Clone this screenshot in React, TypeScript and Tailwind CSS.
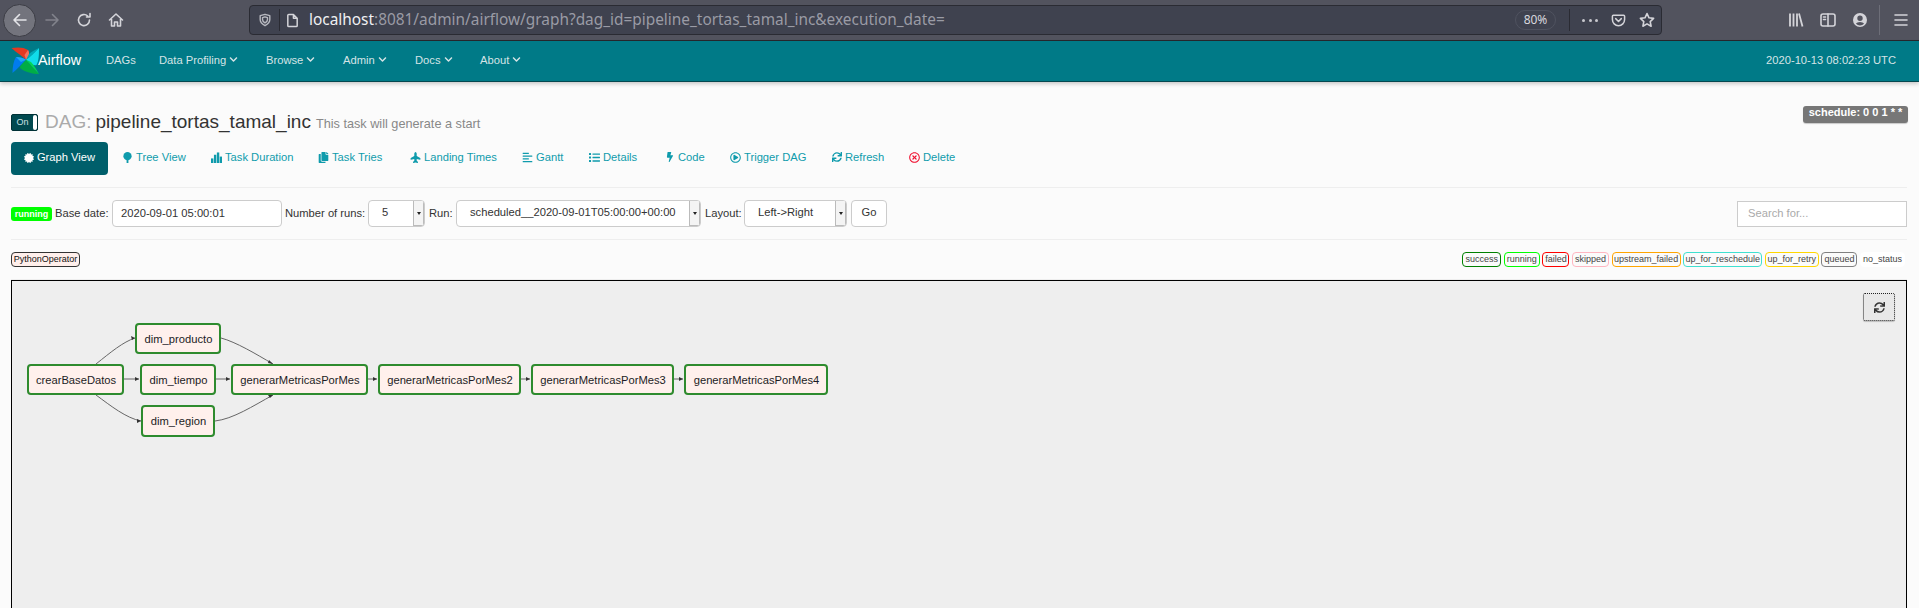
import {
  FaAlignLeft,
  FaBolt,
  FaCertificate,
  FaChevronDown,
  FaCopy,
  FaList,
  FaPlane,
  FaRegPlayCircle,
  FaRegTimesCircle,
  FaSync,
} from "react-icons/fa";

const SANS = "font-['Liberation_Sans',Arial,sans-serif]";

const NAV_ITEMS = [
  { label: "DAGs", className: "w-[53px]", menu: false },
  { label: "Data Profiling", className: "w-[107px]", menu: true },
  { label: "Browse", className: "w-[77px]", menu: true },
  { label: "Admin", className: "w-[72px]", menu: true },
  { label: "Docs", className: "w-[65px]", menu: true },
  { label: "About", className: "w-[60px]", menu: true },
];

function TreeIcon() {
  return (
    <svg viewBox="0 0 12 12" className="w-[11px] h-[11px] fill-current">
      <circle cx="6" cy="4.5" r="4.5" />
      <rect x="5" y="6" width="2" height="6" />
    </svg>
  );
}

function StatsIcon() {
  return (
    <svg viewBox="0 0 12 12" className="w-[11px] h-[11px] fill-current">
      <rect x="0" y="7" width="2.6" height="5" />
      <rect x="3.2" y="3" width="2.6" height="9" />
      <rect x="6.4" y="0.5" width="2.6" height="11.5" />
      <rect x="9.5" y="5" width="2.5" height="7" />
    </svg>
  );
}

const TABS = [
  { label: "Tree View", icon: <TreeIcon />, className: "w-[89px]", iconClass: "text-[#0f9bac]" },
  { label: "Task Duration", icon: <StatsIcon />, className: "w-[107px]", iconClass: "text-[#0f9bac]" },
  { label: "Task Tries", icon: <FaCopy size={11} />, className: "w-[92px]", iconClass: "text-[#0f9bac]" },
  { label: "Landing Times", icon: <FaPlane size={11} className="-rotate-90" />, className: "w-[112px]", iconClass: "text-[#0f9bac]" },
  { label: "Gantt", icon: <FaAlignLeft size={11} />, className: "w-[67px]", iconClass: "text-[#0f9bac]" },
  { label: "Details", icon: <FaList size={11} />, className: "w-[75px]", iconClass: "text-[#0f9bac]" },
  { label: "Code", icon: <FaBolt size={10} />, className: "w-[66px]", iconClass: "text-[#0f9bac]" },
  { label: "Trigger DAG", icon: <FaRegPlayCircle size={11} />, className: "w-[101px]", iconClass: "text-[#0f9bac]" },
  { label: "Refresh", icon: <FaSync size={10} />, className: "w-[78px]", iconClass: "text-[#0f9bac]" },
  { label: "Delete", icon: <FaRegTimesCircle size={11} />, className: "w-[60px]", iconClass: "text-[#f01030]" },
];

const STATES = [
  { label: "success", className: "w-[39px] border-[#008000]" },
  { label: "running", className: "w-[36px] border-[#00ff00]" },
  { label: "failed", className: "w-[27px] border-[#ff0000]" },
  { label: "skipped", className: "w-[37px] border-[#ffb6c1]" },
  { label: "upstream_failed", className: "w-[69px] border-[#ffa500]" },
  { label: "up_for_reschedule", className: "w-[79px] border-[#40e0d0]" },
  { label: "up_for_retry", className: "w-[54px] border-[#ffd700]" },
  { label: "queued", className: "w-[36px] border-[#808080]" },
  { label: "no_status", className: "w-[45px] border-white bg-white" },
];

const NODES = [
  { label: "crearBaseDatos", className: "left-[15px] top-[83px] w-[97px] h-[31px]" },
  { label: "dim_producto", className: "left-[123px] top-[42px] w-[86px] h-[31px]" },
  { label: "dim_tiempo", className: "left-[128px] top-[83px] w-[76px] h-[31px]" },
  { label: "dim_region", className: "left-[129px] top-[124px] w-[74px] h-[32px]" },
  { label: "generarMetricasPorMes", className: "left-[219px] top-[83px] w-[137px] h-[31px]" },
  { label: "generarMetricasPorMes2", className: "left-[366px] top-[83px] w-[143px] h-[31px]" },
  { label: "generarMetricasPorMes3", className: "left-[519px] top-[83px] w-[143px] h-[31px]" },
  { label: "generarMetricasPorMes4", className: "left-[672px] top-[83px] w-[144px] h-[31px]" },
];

// edge paths, in the coordinates of the graph box
const EDGES = [
  "M84 83 C99 71 111 61 123 57",
  "M112 98 L127 98",
  "M84 114 C99 125 114 137 129 140",
  "M209 57 C224 61 244 73 261 83",
  "M204 98 L218 98",
  "M203 140 C221 138 241 125 261 114",
  "M356 98 L365 98",
  "M509 98 L518 98",
  "M662 98 L671 98",
];

const ARROWS = [
  "M123 57 L119 55 L120 59 Z",
  "M127 98 L123 96 L123 100 Z",
  "M129 140 L125 138 L125 142 Z",
  "M261 83 L257 79 L256 82 Z",
  "M218 98 L214 96 L214 100 Z",
  "M261 114 L256 114 L258 117 Z",
  "M365 98 L361 96 L361 100 Z",
  "M518 98 L514 96 L514 100 Z",
  "M671 98 L667 96 L667 100 Z",
];

function BrowserIcon({ children, className }: { children: React.ReactNode; className: string }) {
  return (
    <svg
      viewBox="0 0 16 16"
      fill="none"
      stroke="currentColor"
      strokeWidth="1.6"
      strokeLinecap="round"
      strokeLinejoin="round"
      className={className}
    >
      {children}
    </svg>
  );
}

function BrowserBar() {
  return (
    <div className="h-[41px] bg-[#52535e] border-b border-[#26272c] flex items-center text-[#d4d4d9] font-['Noto_Sans',sans-serif]">
      {/* back / forward / reload / home */}
      <div className="w-[33px] h-[33px] ml-[3px] rounded-full bg-[#73747d] border border-[#3c3d45] flex items-center justify-center">
        <BrowserIcon className="w-[16px] h-[16px] text-[#e4e4e8]">
          <path d="M14 8H2M7.5 2.5 2 8l5.5 5.5" />
        </BrowserIcon>
      </div>
      <BrowserIcon className="w-[16px] h-[16px] ml-[8px] text-[#82838c]">
        <path d="M2 8h12M8.5 2.5 14 8l-5.5 5.5" />
      </BrowserIcon>
      <BrowserIcon className="w-[16px] h-[16px] ml-[16px]">
        <path d="M13.5 8a5.5 5.5 0 1 1-1.8-4M14 1.5V5h-3.5" />
      </BrowserIcon>
      <BrowserIcon className="w-[16px] h-[16px] ml-[16px]">
        <path d="M1.5 8 8 2l6.5 6M3.5 7v7h3v-4h3v4h3V7" />
      </BrowserIcon>

      {/* address bar */}
      <div className="w-[1413px] h-[30px] ml-[125px] rounded-[4px] bg-[#3f424f] border border-[#2a2b33] flex items-center">
        <BrowserIcon className="w-[14px] h-[14px] ml-[8px] text-[#b8b9c0]">
          <path d="M8 1.5 2.5 3v4.5c0 3 2.5 5.5 5.5 7 3-1.5 5.5-4 5.5-7V3z" />
          <path d="M8 4.5 5.2 5.3v2.4c0 1.5 1.2 2.7 2.8 3.6 1.6-.9 2.8-2.1 2.8-3.6V5.3z" />
        </BrowserIcon>
        <div className="w-px h-[22px] bg-[#2a2b33] ml-[7px]" />
        <BrowserIcon className="w-[15px] h-[15px] ml-[5px] text-[#d4d4d9]">
          <path d="M3 2.5C3 1.9 3.4 1.5 4 1.5h5l4 4v8c0 .6-.4 1-1 1H4c-.6 0-1-.4-1-1zM9 1.5v4h4" />
        </BrowserIcon>
        <div className="ml-[9px] w-[1206px] text-[15.4px] leading-[22px] text-[#9a9ba5] whitespace-nowrap">
          <span className="text-[#f0f0f3]">localhost</span>:8081/admin/airflow/graph?dag_id=pipeline_tortas_tamal_inc&amp;execution_date=
        </div>
        <div className="w-[41px] h-[20px] rounded-full border border-[#4f525f] flex items-center justify-center text-[12px] text-[#d8d8de] shrink-0">
          80%
        </div>
        <div className="w-px h-[22px] bg-[#2a2b33] ml-[13px] shrink-0" />
        <div className="ml-[12px] w-[16px] flex justify-between shrink-0">
          <span className="w-[3px] h-[3px] rounded-full bg-[#c8c8ce]" />
          <span className="w-[3px] h-[3px] rounded-full bg-[#c8c8ce]" />
          <span className="w-[3px] h-[3px] rounded-full bg-[#c8c8ce]" />
        </div>
        <BrowserIcon className="w-[15px] h-[15px] ml-[13px] shrink-0 text-[#d4d4d9]">
          <path d="M2.5 2.5h11c.5 0 1 .4 1 1V7a6.5 6.5 0 0 1-13 0V3.5c0-.6.5-1 1-1zM5 6l3 3 3-3" />
        </BrowserIcon>
        <BrowserIcon className="w-[16px] h-[16px] ml-[13px] shrink-0 text-[#d4d4d9]">
          <path d="m8 1.5 2 4.3 4.6.6-3.4 3.2.9 4.6L8 11.9l-4.1 2.3.9-4.6L1.4 6.4 6 5.8z" />
        </BrowserIcon>
      </div>

      {/* toolbar right */}
      <svg viewBox="0 0 16 16" fill="none" stroke="currentColor" strokeWidth="1.8" className="w-[16px] h-[16px] ml-[126px]">
        <path d="M2 1.5v13M5.5 1.5v13M9 1.5v13M11 1.5l3.5 13" />
      </svg>
      <BrowserIcon className="w-[16px] h-[16px] ml-[16px]">
        <rect x="1" y="2" width="14" height="12" rx="2" />
        <path d="M8 2v12M3.5 5h2M3.5 7.5h2" />
      </BrowserIcon>
      <svg viewBox="0 0 16 16" className="w-[16px] h-[16px] ml-[16px] fill-current">
        <path d="M8 1a7 7 0 1 0 0 14A7 7 0 0 0 8 1zm0 2.5a2.7 2.7 0 1 1 0 5.4 2.7 2.7 0 0 1 0-5.4zm0 10a5.5 5.5 0 0 1-4-1.7c.6-1.2 2.2-1.9 4-1.9s3.4.7 4 1.9a5.5 5.5 0 0 1-4 1.7z" />
      </svg>
      <div className="w-px h-[30px] bg-[#6d6e78] ml-[11px]" />
      <BrowserIcon className="w-[16px] h-[16px] ml-[13px]">
        <path d="M2 3h12M2 8h12M2 13h12" />
      </BrowserIcon>
    </div>
  );
}

function AirflowLogo() {
  return (
    <svg viewBox="0 0 28 28" className="w-[28px] h-[28px] shrink-0">
      {/* red blade */}
      <path d="M0.5 1 C6 0 13 0 17 3 C19 6 18 10 15 12.7 C11 9 6 6 0.5 1 Z" fill="#e43921" />
      <path d="M17 3 C19 6 18 10 15 12.7 L13.5 8 Z" fill="#f4725f" />
      {/* cyan blade */}
      <path d="M28 1 C28 7 28 14 25.5 18 C22 19 18 16 15 12.7 C19 10 23 6 28 1 Z" fill="#11dcea" />
      <path d="M15 12.7 C19 10 23 6 28 1 C24 3 20 5 18 7 Z" fill="#00a9b8" />
      {/* green blade */}
      <path d="M28 27 C22 27 14 25 9 21 C9 18 12 15 15 12.7 C19 17 23 22 28 27 Z" fill="#00ad46" />
      <path d="M15 12.7 C19 17 23 22 28 27 C25 22 23 18 20 15 Z" fill="#04d659" />
      {/* blue blade */}
      <path d="M1.5 26 C1.5 20 2.5 14 5 10 C9 10 12 11 15 12.7 C11 17 6 22 1.5 26 Z" fill="#017cee" />
      <path d="M5 10 C9 10 12 11 15 12.7 L10 15 Z" fill="#22a7f5" />
    </svg>
  );
}

function TopNav() {
  return (
    <div className={`h-[41px] bg-[#007a87] border-b border-[#054850] shadow-[0_2px_4px_rgba(0,0,0,0.2)] flex items-center relative ${SANS}`}>
      <div className="ml-[11px] flex items-center">
        <AirflowLogo />
        <span className="-ml-px w-[68px] text-[14.4px] text-white">Airflow</span>
      </div>
      <div className="flex items-center text-[11.2px] text-[#d5e4e6] pb-[2px]">
        {NAV_ITEMS.map((item) => (
          <div key={item.label} className={`flex items-center gap-[3px] ${item.className}`}>
            {item.label}
            {item.menu && <FaChevronDown size={9} />}
          </div>
        ))}
      </div>
      <div className="ml-auto mr-[23px] pb-[2px] text-[11.2px] text-[#d5e4e6]">2020-10-13 08:02:23 UTC</div>
    </div>
  );
}

function SelectBox({ value, className, textClass }: { value: string; className: string; textClass: string }) {
  return (
    <div className={`h-[27px] bg-white border border-[#ccc] rounded-[4px] flex items-center overflow-hidden ${className}`}>
      <span className={`flex-1 whitespace-nowrap pb-[2px] ${textClass}`}>{value}</span>
      <span className="w-[11px] h-full bg-[#f4f4f4] border-l border-[#bbb] border-r border-b flex items-center justify-center shrink-0">
        <span className="w-0 h-0 border-x-[2.5px] border-x-transparent border-t-[3px] border-t-[#222]" />
      </span>
    </div>
  );
}

function Graph() {
  return (
    <div className="relative h-[400px] bg-[#eee] border-t border-x border-black">
      <svg className="absolute inset-0 w-full h-full">
        {EDGES.map((d) => (
          <path key={d} d={d} fill="none" stroke="#666" strokeWidth="1" />
        ))}
        {ARROWS.map((d) => (
          <path key={d} d={d} fill="#333" />
        ))}
      </svg>
      {NODES.map((node) => (
        <div
          key={node.label}
          className={`absolute flex items-center justify-center pt-px pl-px rounded-[4px] border-2 border-[#2e8b2e] bg-[#fff0ec] text-[11.2px] text-[#1c1c24] whitespace-nowrap ${node.className}`}
        >
          {node.label}
        </div>
      ))}
      <button className="absolute right-[11px] top-[12px] w-[32px] h-[28px] flex items-center justify-center bg-[#e8e8e8] border border-dotted border-[#222] rounded-[2px] shadow-[0_1px_1px_rgba(0,0,0,0.2)] text-[#333]">
        <FaSync size={11} />
      </button>
    </div>
  );
}

export default function App() {
  return (
    <div className={`h-[608px] overflow-hidden bg-[#fbfbfb] text-[#333] ${SANS}`}>
      <BrowserBar />
      <TopNav />

      <main className="pl-[11px] pr-[12px] text-[11.2px]">
        {/* Title */}
        <div className="h-[60px] flex justify-between items-start">
          <div className="mt-[26px] flex items-baseline">
            <span className="w-[27px] h-[17px] self-center bg-[#00494f] border border-[#003136] rounded-[2px] flex overflow-hidden">
              <span className="w-[21px] text-[9px] text-[#cfe3e5] text-center leading-[15px]">On</span>
              <span className="flex-1 bg-white rounded-[2px]" />
            </span>
            <span className="ml-[7px] text-[19px] text-[#aaa]">DAG:</span>
            <span className="ml-[4px] text-[19px] text-[#333]">pipeline_tortas_tamal_inc</span>
            <span className="ml-[5px] text-[12.7px] text-[#888]">This task will generate a start</span>
          </div>
          <div className="mt-[24px] w-[105px] h-[17px] -mr-px bg-[#777] rounded-[3px] text-white text-[11px] font-bold text-center leading-[13px] shadow-[0_1px_1px_rgba(0,0,0,0.2)]">
            schedule: 0 0 1 * *
          </div>
        </div>

        {/* Tabs */}
        <div className="h-[33px] flex items-center">
          <div className="w-[97px] h-full pb-[2px] bg-[#005f6b] rounded-[4px] text-white flex items-center justify-center gap-[3px] mr-[14px]">
            <FaCertificate size={10} />
            Graph View
          </div>
          {TABS.map((tab) => (
            <div key={tab.label} className={`flex items-center gap-[3px] pb-[2px] text-[#0f9bac] ${tab.className}`}>
              <span className={`w-[11px] flex justify-center ${tab.iconClass}`}>{tab.icon}</span>
              {tab.label}
            </div>
          ))}
        </div>
        <div className="h-px bg-[#eee] mt-[12px]" />

        {/* Controls */}
        <div className="h-[51px] flex items-center">
          <span className="w-[41px] h-[14px] bg-[#00ff00] rounded-[3px] text-white text-[9px] text-center leading-[14px] font-bold shrink-0">
            running
          </span>
          <span className="ml-[3px] w-[57px] pb-px shrink-0">Base date:</span>
          <input
            readOnly
            value="2020-09-01 05:00:01"
            className="w-[170px] h-[27px] bg-white border border-[#ccc] rounded-[4px] pl-[8px] pb-[2px] outline-none"
          />
          <span className="ml-[3px] w-[83px] pb-px shrink-0">Number of runs:</span>
          <SelectBox value="5" className="w-[57px]" textClass="pl-[13px]" />
          <span className="ml-[4px] w-[27px] pb-px shrink-0">Run:</span>
          <SelectBox value="scheduled__2020-09-01T05:00:00+00:00" className="w-[245px]" textClass="pl-[13px]" />
          <span className="ml-[4px] w-[39px] pb-px shrink-0">Layout:</span>
          <SelectBox value="Left->Right" className="w-[103px]" textClass="pl-[13px]" />
          <button className="ml-[4px] w-[36px] h-[27px] pb-[2px] bg-white border border-[#ccc] rounded-[4px] text-[#333] shrink-0">Go</button>
          <input
            placeholder="Search for..."
            className="ml-auto w-[170px] h-[26px] pb-[2px] bg-white border border-[#ccc] pl-[10px] outline-none placeholder:text-[#aaa]"
          />
        </div>
        <div className="h-px bg-[#eee]" />

        {/* Legend */}
        <div className="h-[39px] flex items-center justify-between text-[9px]">
          <span className="w-[69px] h-[15px] rounded-[4px] border border-[#333] bg-[#ffefeb] text-[#111] text-center leading-[13px]">
            PythonOperator
          </span>
          <div className="flex items-center gap-[2.6px] mr-[2px] text-[#444]">
            {STATES.map((state) => (
              <span
                key={state.label}
                className={`h-[15px] rounded-[4px] border text-center leading-[13px] whitespace-nowrap ${state.className}`}
              >
                {state.label}
              </span>
            ))}
          </div>
        </div>
        <div className="h-px bg-[#eee]" />

        <Graph />
      </main>
    </div>
  );
}
